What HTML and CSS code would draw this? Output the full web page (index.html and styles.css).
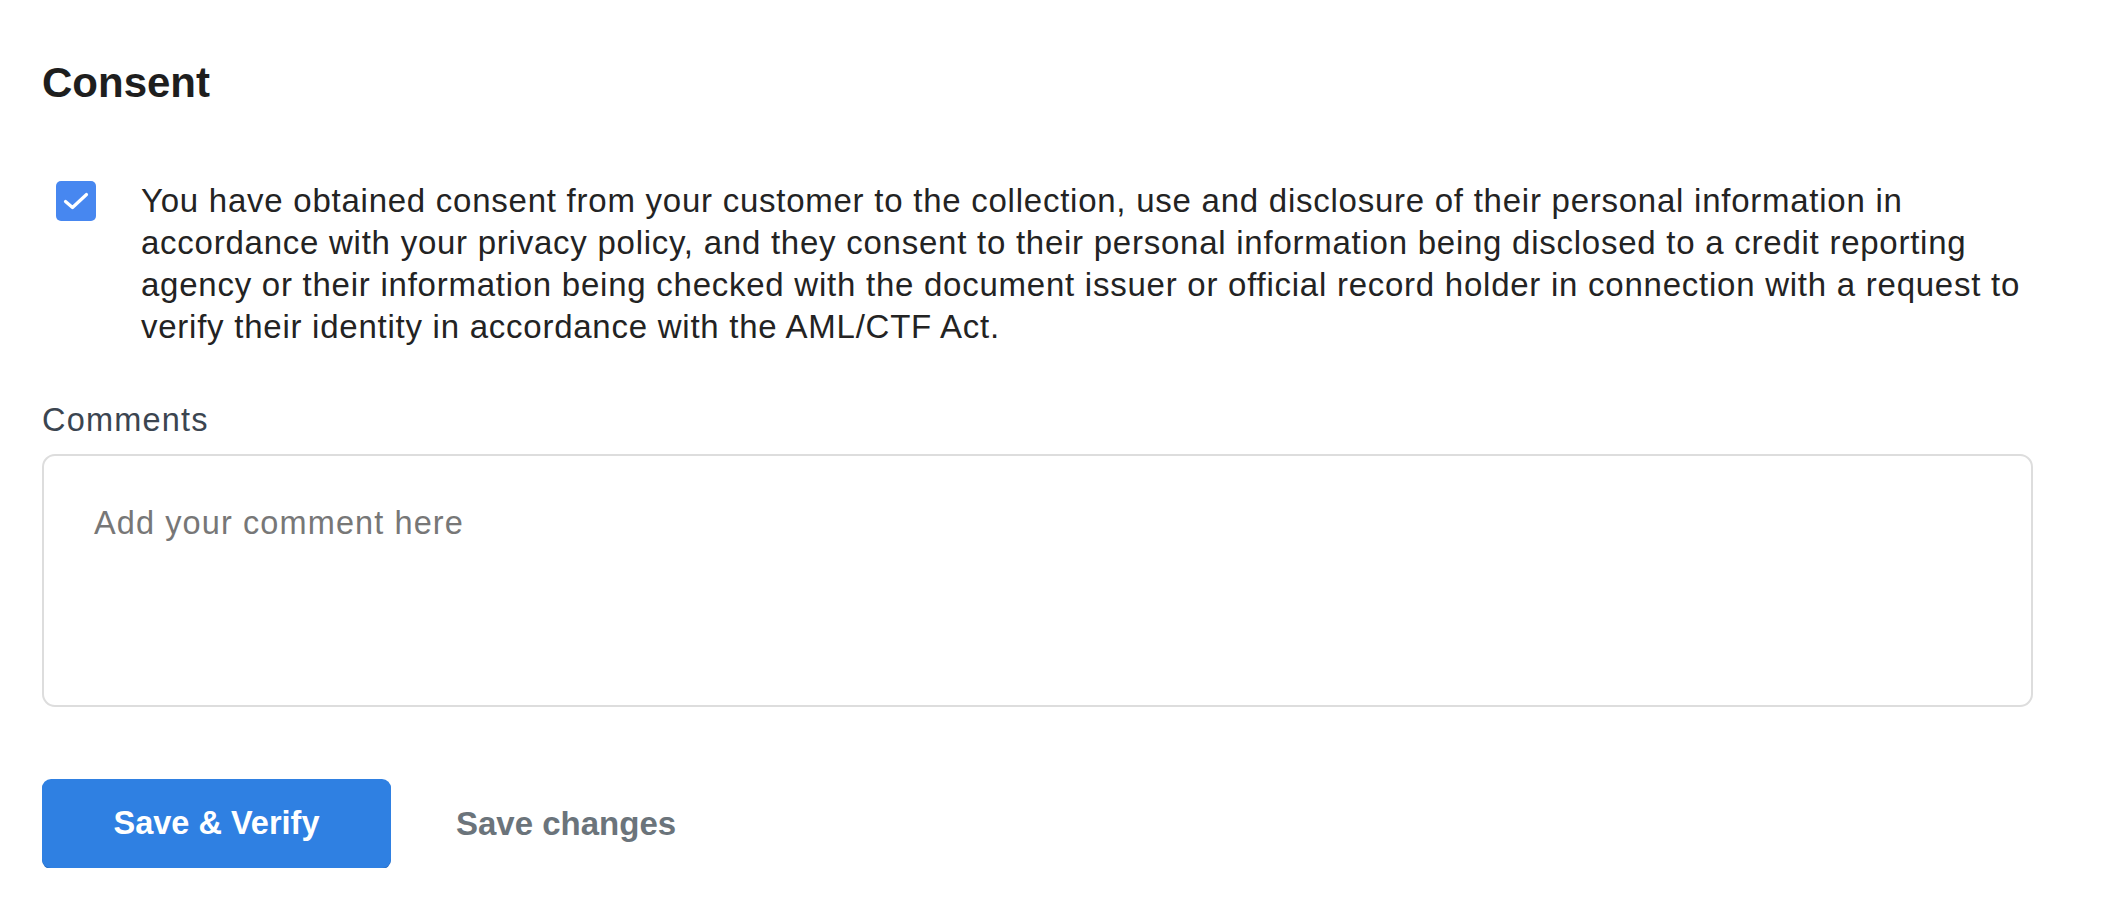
FILE: index.html
```html
<!DOCTYPE html>
<html lang="en">
<head>
<meta charset="utf-8">
<title>Consent</title>
<link rel="stylesheet" href="styles.css">
</head>
<body>
<main class="page">
  <h2 class="title">Consent</h2>
  <div class="consent-row">
    <span class="checkbox" role="checkbox" aria-checked="true">
      <svg viewBox="0 0 40 40" width="40" height="40" aria-hidden="true">
        <path d="M9.5 20.5 L16.5 26.5 L30.5 13.5" fill="none" stroke="#ffffff" stroke-width="3.2" stroke-linecap="round" stroke-linejoin="round"/>
      </svg>
    </span>
    <p class="consent-text">You have obtained consent from your customer to the collection, use and disclosure of their personal information in<br>accordance with your privacy policy, and they consent to their personal information being disclosed to a credit reporting<br>agency or their information being checked with the document issuer or official record holder in connection with a request to<br>verify their identity in accordance with the AML/CTF Act.</p>
  </div>
  <label class="field-label" for="comments">Comments</label>
  <textarea id="comments" class="comments" placeholder="Add your comment here"></textarea>
  <div class="actions">
    <button class="btn-primary" type="button">Save &amp; Verify</button>
    <button class="btn-link" type="button">Save changes</button>
  </div>
</main>
</body>
</html>
```

FILE: styles.css
```css
* { box-sizing: border-box; }

html, body {
  margin: 0;
  padding: 0;
  background: #ffffff;
}

body {
  font-family: "Liberation Sans", Arial, sans-serif;
  color: #222222;
}

.page {
  width: 2033px;
  padding: 58px 0 0 42px;
  display: flex;
  flex-direction: column;
  align-items: flex-start;
}

.title {
  margin: 0;
  font-size: 42px;
  line-height: 50px;
  font-weight: 700;
  color: #1e1e1e;
}

.consent-row {
  margin-top: 72px;
  display: flex;
  align-items: flex-start;
  width: 100%;
  padding-left: 14px;
}

.checkbox {
  flex: 0 0 40px;
  width: 40px;
  height: 40px;
  margin-top: 1px;
  border-radius: 5px;
  background: #4787f0;
  display: flex;
  align-items: center;
  justify-content: center;
}

.checkbox svg { display: block; }

.consent-text {
  margin: 0 -40px 0 45px;
  font-size: 33px;
  line-height: 42px;
  letter-spacing: 0.75px;
  color: #232323;
  flex: 1;
}

.field-label {
  margin-top: 51px;
  font-size: 32.5px;
  line-height: 42px;
  letter-spacing: 1.2px;
  color: #3b4550;
}

.comments {
  margin-top: 13px;
  width: 100%;
  height: 253px;
  border: 2px solid #dddddd;
  border-radius: 13px;
  padding: 46px 50px;
  font-family: "Liberation Sans", Arial, sans-serif;
  font-size: 32.5px;
  line-height: 42px;
  letter-spacing: 1.1px;
  color: #222222;
  resize: none;
  outline: none;
  background: #ffffff;
}

.comments::placeholder {
  color: #777777;
  opacity: 1;
}

.actions {
  margin-top: 72px;
  display: flex;
  align-items: center;
  gap: 65px;
}

.btn-primary {
  width: 349px;
  height: 89px;
  border: none;
  border-radius: 9px;
  background: #2f80e2;
  box-shadow: 0 1px 0 #2a6fc4;
  color: #ffffff;
  font-family: "Liberation Sans", Arial, sans-serif;
  font-size: 32.5px;
  font-weight: 700;
  padding: 0;
  cursor: pointer;
}

.btn-link {
  border: none;
  background: none;
  padding: 0;
  color: #6b747b;
  font-family: "Liberation Sans", Arial, sans-serif;
  font-size: 33px;
  font-weight: 700;
  cursor: pointer;
}
```
